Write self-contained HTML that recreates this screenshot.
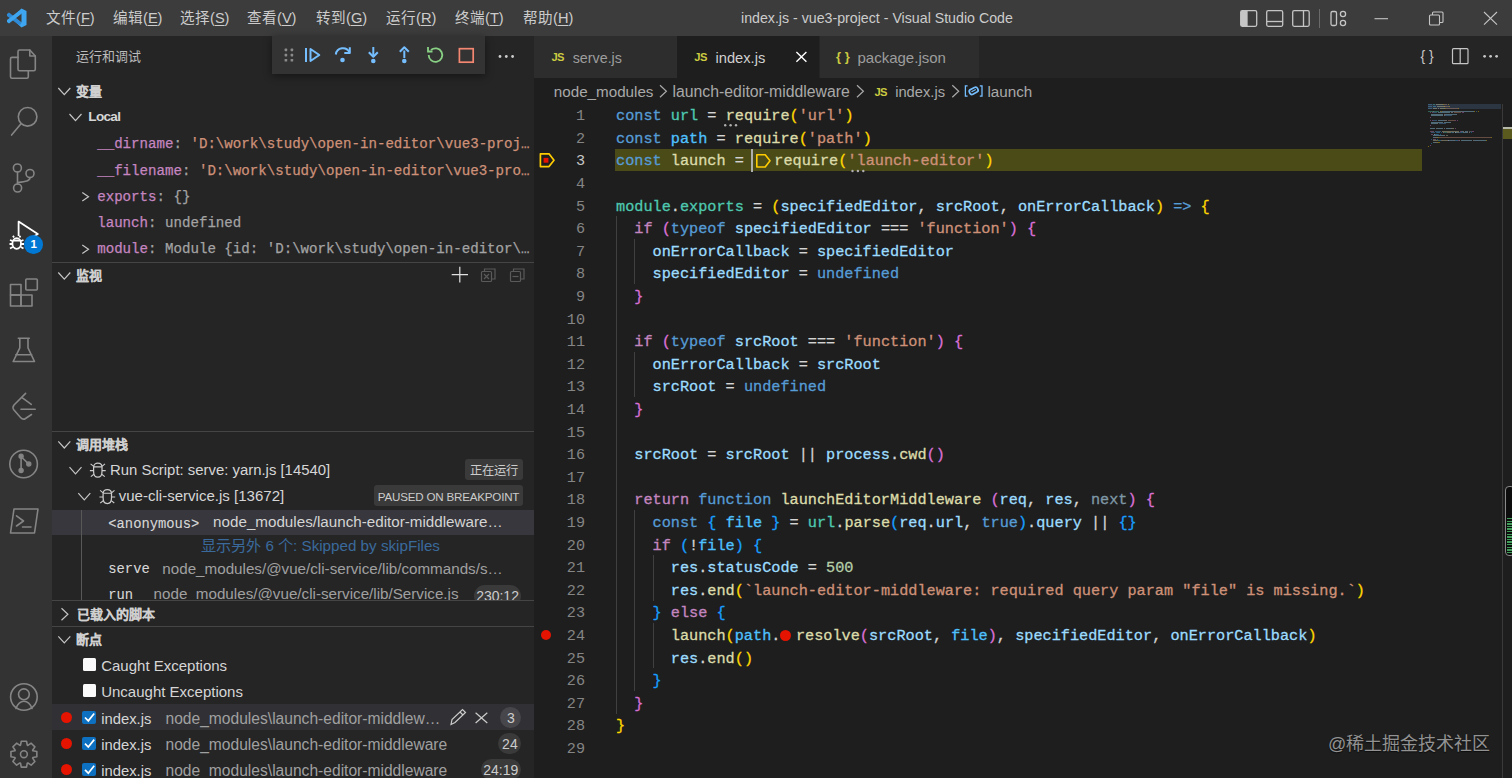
<!DOCTYPE html>
<html lang="zh-CN"><head><meta charset="utf-8">
<style>
*{margin:0;padding:0;box-sizing:border-box}
html,body{width:1512px;height:778px;overflow:hidden;background:#1e1e1e;font-family:"Liberation Sans",sans-serif;color:#d6d6d6}
.a{position:absolute;white-space:pre}
.mono{font-family:"Liberation Mono",monospace}
svg{position:absolute;overflow:visible}
.menu{font-size:14.6px;color:#cccccc;height:36px;line-height:36px;top:0}
.r{position:absolute;white-space:pre;height:26px;line-height:26px}
.ui{font-size:15px}
.hd{font-size:13px;font-weight:bold;color:#d0d0d0;-webkit-text-stroke:0.12px currentColor}
.vn{color:#c586c0}.vs{color:#ce9178}.vg{color:#a3a3a3}
.mono{-webkit-text-stroke:0.25px currentColor}
.cl{-webkit-text-stroke:0.3px currentColor;position:absolute;left:616px;height:22.6px;line-height:22.6px;font-family:"Liberation Mono",monospace;font-size:15.23px;white-space:pre;color:#d4d4d4}
.ln{position:absolute;left:545px;width:40px;text-align:right;height:22.6px;line-height:22.6px;font-family:"Liberation Mono",monospace;font-size:15.17px;color:#858585}
.k{color:#569cd6}.c{color:#c586c0}.v{color:#9cdcfe}.cn{color:#4fc1ff}.t{color:#4ec9b0}.f{color:#dcdcaa}.s{color:#ce9178}.n{color:#b5cea8}
.b1{color:#ffd700}.b2{color:#da70d6}.b3{color:#179fff}.dm{color:#7f98a6}
.badge{position:absolute;background:#3a3a3a;color:#cccccc;border-radius:3px;white-space:pre;text-align:center}
.pill{position:absolute;background:#3a3a3a;color:#cccccc;border-radius:11px;white-space:pre;text-align:center;font-size:14px}
.sep{position:absolute;left:52px;width:482px;height:1px;background:#454545}
</style></head><body>
<div class="a" style="left:0;top:0;width:1512px;height:36px;background:#3c3c3c"></div>
<div class="a" style="left:0;top:36px;width:52px;height:742px;background:#333333"></div>
<div class="a" style="left:52px;top:36px;width:482px;height:742px;background:#252526"></div>
<div class="a" style="left:534px;top:36px;width:978px;height:41.7px;background:#252526"></div>
<svg style="left:0;top:0" width="40" height="36"><path d="M21.5 8.5 L26.5 11 L26.5 25 L21.5 27.5 L11 18 L21.5 8.5Z M21.5 13.5 L15.5 18 L21.5 22.5Z" fill="#3ea6f0" fill-rule="evenodd"/><path d="M7 14 L9 12.5 L21 22 L21 24 L19 25 L7 16Z" fill="#2f8ad6"/><path d="M7 22 L9 23.5 L21 14 L21 12 L19 11 L7 20Z" fill="#3ea6f0"/></svg>
<div class="a menu" style="left:46px">文件(<u style="text-underline-offset:2px">F</u>)</div>
<div class="a menu" style="left:113px">编辑(<u style="text-underline-offset:2px">E</u>)</div>
<div class="a menu" style="left:180px">选择(<u style="text-underline-offset:2px">S</u>)</div>
<div class="a menu" style="left:247px">查看(<u style="text-underline-offset:2px">V</u>)</div>
<div class="a menu" style="left:316px">转到(<u style="text-underline-offset:2px">G</u>)</div>
<div class="a menu" style="left:386px">运行(<u style="text-underline-offset:2px">R</u>)</div>
<div class="a menu" style="left:455px">终端(<u style="text-underline-offset:2px">T</u>)</div>
<div class="a menu" style="left:523px">帮助(<u style="text-underline-offset:2px">H</u>)</div>
<div class="a" style="left:741px;top:0;height:36px;line-height:36px;font-size:14.2px;color:#cccccc">index.js - vue3-project - Visual Studio Code</div>
<svg style="left:0;top:0" width="1512" height="36" fill="none" stroke="#c5c5c5" stroke-width="1.3">
<rect x="1240.7" y="10.7" width="16" height="15.6" rx="1.5"/><rect x="1241" y="11" width="6" height="15" fill="#c5c5c5" stroke="none"/><line x1="1247" y1="11" x2="1247" y2="26"/>
<rect x="1266.7" y="10.7" width="16" height="15.6" rx="1.5"/><line x1="1267" y1="21.5" x2="1282.5" y2="21.5"/>
<rect x="1292.7" y="10.7" width="16.5" height="15.6" rx="1.5"/><line x1="1303.5" y1="11" x2="1303.5" y2="26"/>
<line x1="1319.5" y1="9" x2="1319.5" y2="28" stroke="#6a6a6a" stroke-width="1"/>
<rect x="1331" y="11.5" width="5.5" height="14" rx="1.5"/><circle cx="1343" cy="14" r="2.6"/><circle cx="1343" cy="23" r="2.6"/>
<line x1="1374.5" y1="18.7" x2="1388" y2="18.7" stroke-width="1.1"/>
<rect x="1429.5" y="15" width="10" height="10" rx="1" stroke-width="1.1"/><path d="M1432.5 15 V13 a1 1 0 0 1 1 -1 H1442 a1 1 0 0 1 1 1 V21.5 a1 1 0 0 1 -1 1 H1439.5" stroke-width="1.1"/>
<path d="M1484 12 L1497 24.7 M1497 12 L1484 24.7" stroke-width="1.1"/>
</svg>
<svg style="left:0;top:0" width="52" height="778" fill="none" stroke="#858585" stroke-width="1.6" stroke-linejoin="round" stroke-linecap="round">
<path d="M18 57.4 H12 a1.5 1.5 0 0 0 -1.5 1.5 V76.8 a1.5 1.5 0 0 0 1.5 1.5 H26.8 a1.5 1.5 0 0 0 1.5 -1.5 V70.8"/>
<path d="M19.5 50 H29.8 L35.3 56 V69.3 a1.5 1.5 0 0 1 -1.5 1.5 H19.5 a1.5 1.5 0 0 1 -1.5 -1.5 V51.5 a1.5 1.5 0 0 1 1.5 -1.5Z"/>
<path d="M29.8 50 V56 H35.3"/>
<circle cx="27.6" cy="116.8" r="9.3"/><line x1="11.6" y1="135.1" x2="21" y2="123.7"/>
<circle cx="17.4" cy="168" r="4"/><circle cx="30" cy="173.5" r="4"/><circle cx="17.6" cy="188" r="4"/>
<line x1="17.5" y1="172" x2="17.5" y2="184"/><path d="M30 177.5 C30 181 26 181.5 17.6 182.5"/>
<rect x="10.5" y="284.5" width="10.5" height="10.5"/><rect x="10.5" y="295" width="10.5" height="11"/><rect x="21" y="295" width="11" height="11"/><rect x="25.8" y="279" width="11.5" height="11" rx="1"/>
<path d="M18.3 338.3 H29.3 M19.8 338.3 V347.8 L13.2 361.5 H34.5 L28 347.8 V338.3 M15.8 354.7 H31.7"/>
<path d="M25.6 393.4 L14 405 Q12 407.5 14 410 L20.5 417.5 Q23 420.3 25.5 418.5 L31.5 414.5 M22.4 397.9 L31.3 404.3 M21 409.2 H35.2"/>
<circle cx="23.6" cy="464" r="13.8"/><path d="M21.1 458.5 V468.3 M22.5 458 L27 462.3"/><circle cx="21.1" cy="456.3" r="2.1" fill="#858585" stroke-width="1.2"/><circle cx="28.8" cy="464" r="2.1" fill="#858585" stroke-width="1.2"/><circle cx="21.1" cy="470.5" r="2.1" fill="#858585" stroke-width="1.2"/>
<path d="M14 509 H38 L34.5 533 H10.5Z"/><path d="M16.5 515.8 L23.5 521 L16.5 526 M22.5 527 H31"/>
<circle cx="23.9" cy="697" r="13.3"/><circle cx="23.9" cy="694.3" r="5.4"/><path d="M16 708.5 C18 703 21 701.3 23.9 701.3 C26.8 701.3 30 703 32 708.5"/>
</svg>
<svg style="left:0;top:0" width="52" height="778" fill="none" stroke="#858585" stroke-width="1.6" stroke-linejoin="round"><polygon points="36.84,751.58 36.84,756.82 32.88,757.58 32.64,758.16 34.90,761.49 31.19,765.20 27.86,762.94 27.28,763.18 26.52,767.14 21.28,767.14 20.52,763.18 19.94,762.94 16.61,765.20 12.90,761.49 15.16,758.16 14.92,757.58 10.96,756.82 10.96,751.58 14.92,750.82 15.16,750.24 12.90,746.91 16.61,743.20 19.94,745.46 20.52,745.22 21.28,741.26 26.52,741.26 27.28,745.22 27.86,745.46 31.19,743.20 34.90,746.91 32.64,750.24 32.88,750.82"/><circle cx="23.9" cy="754.2" r="3.4"/></svg>
<svg style="left:0;top:0" width="52" height="778" fill="none" stroke="#ffffff" stroke-width="1.8" stroke-linejoin="round">
<path d="M18.6 236 V221.6 L37.8 234 L33.5 236.8"/>
<ellipse cx="16.7" cy="243.5" rx="4.3" ry="5.3"/><path d="M13 240.5 H20.5 M10 240 L12.5 241 M23.5 240 L21 241 M9.5 244 H12.3 M24 244 H21 M10 248.5 L12.8 247 M23.5 248.5 L20.8 247 M14 237.5 L13 235.8 M19.4 237.5 L20.4 235.8"/>
</svg>
<div class="a" style="left:24.4px;top:235.4px;width:18.6px;height:18.6px;border-radius:50%;background:#0078d4;color:#fff;font-size:11.5px;font-weight:bold;text-align:center;line-height:18.6px">1</div>
<div class="r ui" style="left:76px;top:44.20px;height:26px;line-height:26px;font-size:13px;color:#bbbbbb">运行和调试</div>
<div class="a" style="left:271.5px;top:36px;width:213px;height:37.5px;background:#333333;box-shadow:0 2px 8px rgba(0,0,0,0.45)"></div>
<svg style="left:0;top:0" width="1" height="1">
<g fill="#8b8b8b"><rect x="284.6" y="48.6" width="2.6" height="2.6" rx="0.6"/><rect x="290.6" y="48.6" width="2.6" height="2.6" rx="0.6"/><rect x="284.6" y="53.8" width="2.6" height="2.6" rx="0.6"/><rect x="290.6" y="53.8" width="2.6" height="2.6" rx="0.6"/><rect x="284.6" y="59" width="2.6" height="2.6" rx="0.6"/><rect x="290.6" y="59" width="2.6" height="2.6" rx="0.6"/></g>
<g fill="none" stroke="#75beff" stroke-width="2" stroke-linejoin="round">
<line x1="306" y1="48" x2="306" y2="62"/><path d="M310.5 49 L319.3 55 L310.5 61Z"/>
<path d="M335.8 54.5 A7.2 7.2 0 0 1 349.5 52.5"/><path d="M349.8 47.3 V53 H344.3"/>
<line x1="373.3" y1="47" x2="373.3" y2="56.5"/><path d="M368.8 52.3 L373.3 56.8 L377.8 52.3"/>
<line x1="404.3" y1="50.5" x2="404.3" y2="58"/><path d="M399.8 51.7 L404.3 47.2 L408.8 51.7"/>
</g>
<g fill="#75beff"><circle cx="342.5" cy="60" r="2.3"/><circle cx="373.3" cy="61" r="2.3"/><circle cx="404.3" cy="61" r="2.3"/></g>
<path d="M431 50 A6.8 6.8 0 1 1 428.7 55" fill="none" stroke="#89d185" stroke-width="1.8"/><path d="M428 47 V51.5 H432.5" fill="none" stroke="#89d185" stroke-width="1.8"/>
<rect x="459.4" y="48.7" width="13.8" height="13.5" fill="none" stroke="#f48771" stroke-width="1.7"/>
<g fill="#cccccc"><circle cx="500" cy="56.5" r="1.4"/><circle cx="506.3" cy="56.5" r="1.4"/><circle cx="512.6" cy="56.5" r="1.4"/></g>
</svg>
<svg style="left:0;top:0" width="1" height="1"><path d="M58.3 88.0 L64.3 94.6 L70.3 88.0" fill="none" stroke="#c5c5c5" stroke-width="1.2"/></svg>
<div class="r hd" style="left:76px;top:78.50px;height:26px;line-height:26px;">变量</div>
<svg style="left:0;top:0" width="1" height="1"><path d="M69.5 114.0 L75.5 120.6 L81.5 114.0" fill="none" stroke="#c5c5c5" stroke-width="1.2"/></svg>
<div class="r ui" style="left:88.3px;top:104.30px;height:26px;line-height:26px;font-weight:bold;font-size:13.6px;letter-spacing:-0.7px">Local</div>
<div class="r mono" style="left:97.2px;top:130.90px;height:26px;line-height:26px;font-size:14.14px"><span class="vn">__dirname</span><span class="vg">: </span><span class="vs">'D:\work\study\open-in-editor\vue3-proj…</span></div>
<div class="r mono" style="left:97.2px;top:157.50px;height:26px;line-height:26px;font-size:14.14px"><span class="vn">__filename</span><span class="vg">: </span><span class="vs">'D:\work\study\open-in-editor\vue3-pro…</span></div>
<svg style="left:0;top:0" width="1" height="1"><path d="M82.3 192.60000000000002 L88.5 196.8 L82.3 201.0" fill="none" stroke="#c5c5c5" stroke-width="1.2"/></svg>
<div class="r mono" style="left:97.2px;top:183.50px;height:26px;line-height:26px;font-size:14.14px"><span class="vn">exports</span><span class="vg">: {}</span></div>
<div class="r mono" style="left:97.2px;top:210.00px;height:26px;line-height:26px;font-size:14.14px"><span class="vn">launch</span><span class="vg">: undefined</span></div>
<svg style="left:0;top:0" width="1" height="1"><path d="M82.3 245.10000000000002 L88.5 249.3 L82.3 253.5" fill="none" stroke="#c5c5c5" stroke-width="1.2"/></svg>
<div class="r mono" style="left:97.2px;top:236.20px;height:26px;line-height:26px;font-size:14.14px"><span class="vn">module</span><span class="vg">: Module {id: 'D:\work\study\open-in-editor\…</span></div>
<div class="sep" style="top:261.5px"></div>
<svg style="left:0;top:0" width="1" height="1"><path d="M58.3 272.5 L64.3 279.1 L70.3 272.5" fill="none" stroke="#c5c5c5" stroke-width="1.2"/></svg>
<div class="r hd" style="left:76px;top:263.20px;height:26px;line-height:26px;">监视</div>
<svg style="left:0;top:0" width="1" height="1" fill="none" stroke-width="1.2">
<path d="M459.8 266.7 V282.5 M451.7 274.6 H468" stroke="#e0e0e0"/>
<g stroke="#5a5a5a"><rect x="481.5" y="271.5" width="10" height="10" rx="1"/><path d="M484.5 271.5 V269 H495 V279 H491.5"/><path d="M484 274 L489 279 M489 274 L484 279"/>
<rect x="510.5" y="271.5" width="10" height="10" rx="1"/><path d="M513.5 271.5 V269 H524 V279 H520.5"/><path d="M512.5 276.5 H518.5"/></g>
</svg>
<div class="sep" style="top:431.2px"></div>
<svg style="left:0;top:0" width="1" height="1"><path d="M58.3 441.4 L64.3 448.0 L70.3 441.4" fill="none" stroke="#c5c5c5" stroke-width="1.2"/></svg>
<div class="r hd" style="left:76px;top:432.20px;height:26px;line-height:26px;">调用堆栈</div>
<svg style="left:0;top:0" width="1" height="1"><path d="M69.5 467.2 L75.5 473.8 L81.5 467.2" fill="none" stroke="#c5c5c5" stroke-width="1.2"/></svg>
<svg style="left:0;top:0" width="1" height="1"><g transform="translate(89.3,460.6)" fill="none" stroke="#cccccc" stroke-width="1.1"><path d="M4.3 6.5 C4.3 1.2 12.7 1.2 12.7 6.5 V10.8 C12.7 14.5 11 16.6 8.5 16.6 C6 16.6 4.3 14.5 4.3 10.8 Z" stroke-width="1.25"/><path d="M4.5 6.3 H12.5 M1.3 3.3 L4.3 5.8 M15.7 3.3 L12.7 5.8 M0.6 10 H4.3 M16.4 10 H12.7 M1.5 16 L4.6 13.6 M15.5 16 L12.4 13.6"/></g></svg>
<div class="r ui" style="left:110px;top:457.30px;height:26px;line-height:26px;font-size:14.9px">Run Script: serve: yarn.js [14540]</div>
<div class="badge" style="left:465.3px;top:459.3px;width:57.5px;height:21px;line-height:25.3px;font-size:12.3px">正在运行</div>
<svg style="left:0;top:0" width="1" height="1"><path d="M78.3 493.2 L84.3 499.8 L90.3 493.2" fill="none" stroke="#c5c5c5" stroke-width="1.2"/></svg>
<svg style="left:0;top:0" width="1" height="1"><g transform="translate(98.8,487)" fill="none" stroke="#cccccc" stroke-width="1.1"><path d="M4.3 6.5 C4.3 1.2 12.7 1.2 12.7 6.5 V10.8 C12.7 14.5 11 16.6 8.5 16.6 C6 16.6 4.3 14.5 4.3 10.8 Z" stroke-width="1.25"/><path d="M4.5 6.3 H12.5 M1.3 3.3 L4.3 5.8 M15.7 3.3 L12.7 5.8 M0.6 10 H4.3 M16.4 10 H12.7 M1.5 16 L4.6 13.6 M15.5 16 L12.4 13.6"/></g></svg>
<div class="r ui" style="left:118.7px;top:483.40px;height:26px;line-height:26px;font-size:15.05px">vue-cli-service.js [13672]</div>
<div class="badge" style="left:374.3px;top:485.2px;width:148.5px;height:21.2px;line-height:23.4px;font-size:11.6px;letter-spacing:-0.2px">PAUSED ON BREAKPOINT</div>
<div class="a" style="left:52px;top:509.5px;width:482px;height:25.1px;background:#37373d"></div>
<div class="a" style="left:81px;top:509.5px;width:1px;height:91px;background:#585858"></div>
<div class="r mono" style="left:108.3px;top:512.20px;height:26px;line-height:26px;font-size:13.8px;color:#d8d8d8;-webkit-text-stroke:0.1px currentColor">&lt;anonymous&gt;</div>
<div class="r ui" style="left:213.1px;top:509.30px;height:26px;line-height:26px;font-size:15.2px;color:#d4d4d4">node_modules/launch-editor-middleware…</div>
<div class="r ui" style="left:201.2px;top:533.30px;height:26px;line-height:26px;font-size:15.2px;color:#3a6a9c">显示另外 6 个: Skipped by skipFiles</div>
<div class="a" style="left:52px;top:556px;width:482px;height:44px;overflow:hidden">
<div class="r mono" style="left:56.3px;top:1px;font-size:13.8px;color:#d8d8d8;-webkit-text-stroke:0.1px currentColor">serve</div>
<div class="r ui" style="left:110.3px;top:-0.5px;font-size:15.2px;color:#a0a0a0">node_modules/@vue/cli-service/lib/commands/s…</div>
<div class="r mono" style="left:56.3px;top:26.8px;font-size:13.8px;color:#d8d8d8;-webkit-text-stroke:0.1px currentColor">run</div>
<div class="r ui" style="left:101.6px;top:25.4px;font-size:15.2px;color:#a0a0a0">node_modules/@vue/cli-service/lib/Service.js</div>
<div class="pill" style="left:422.4px;top:29.2px;width:46.3px;height:22px;line-height:22px">230:12</div>
</div>
<div class="sep" style="top:600.3px"></div>
<svg style="left:0;top:0" width="1" height="1"><path d="M61.5 608.2 L67.9 614.2 L61.5 620.2" fill="none" stroke="#c5c5c5" stroke-width="1.2"/></svg>
<div class="r hd" style="left:76.6px;top:601.60px;height:26px;line-height:26px;">已载入的脚本</div>
<div class="sep" style="top:625.8px"></div>
<svg style="left:0;top:0" width="1" height="1"><path d="M58.3 636.3000000000001 L64.3 642.9 L70.3 636.3000000000001" fill="none" stroke="#c5c5c5" stroke-width="1.2"/></svg>
<div class="r hd" style="left:76px;top:627.00px;height:26px;line-height:26px;">断点</div>
<div class="a" style="left:83px;top:658px;width:13.4px;height:13.4px;background:#fafafa;border-radius:1.5px"></div>
<div class="r ui" style="left:101.2px;top:653.10px;height:26px;line-height:26px;">Caught Exceptions</div>
<div class="a" style="left:83px;top:684.1px;width:13.4px;height:13.4px;background:#fafafa;border-radius:1.5px"></div>
<div class="r ui" style="left:101.2px;top:679.30px;height:26px;line-height:26px;">Uncaught Exceptions</div>
<div class="a" style="left:52px;top:704.4px;width:482px;height:25.8px;background:#313135"></div>
<div class="a" style="left:60.8px;top:711.80px;width:11px;height:11px;border-radius:50%;background:#e51400"></div>
<div class="a" style="left:82.2px;top:710.50px;width:14.2px;height:13.6px;background:#0e70c0;border-radius:2px"></div>
<svg style="left:0;top:0" width="1" height="1"><path d="M85 717.50 L88.3 720.90 L94.2 713.50" fill="none" stroke="#ffffff" stroke-width="1.7"/></svg>
<div class="r ui" style="left:101.2px;top:705.70px;height:26px;line-height:26px;font-size:14.8px">index.js</div>
<div class="r ui" style="left:165.5px;top:705.70px;height:26px;line-height:26px;font-size:15.6px;color:#a0a0a0">node_modules\launch-editor-middlew…</div>
<div class="pill" style="left:500.3px;top:707.00px;width:21.1px;height:20.6px;line-height:23.6px;font-size:14px;background:#47474b">3</div>
<svg style="left:0;top:0" width="1" height="1" fill="none" stroke="#cccccc" stroke-width="1.2">
<path d="M451 724.5 L452 719.5 L462.5 709.5 L465.5 712.5 L455 722.5 Z M460 712 L463 715"/>
<path d="M475.6 712.7 L487.3 723 M487.3 712.7 L475.6 723"/>
</svg>
<div class="a" style="left:60.8px;top:737.90px;width:11px;height:11px;border-radius:50%;background:#e51400"></div>
<div class="a" style="left:82.2px;top:736.60px;width:14.2px;height:13.6px;background:#0e70c0;border-radius:2px"></div>
<svg style="left:0;top:0" width="1" height="1"><path d="M85 743.60 L88.3 747.00 L94.2 739.60" fill="none" stroke="#ffffff" stroke-width="1.7"/></svg>
<div class="r ui" style="left:101.2px;top:731.80px;height:26px;line-height:26px;font-size:14.8px">index.js</div>
<div class="r ui" style="left:165.5px;top:731.80px;height:26px;line-height:26px;font-size:15.6px;color:#a0a0a0">node_modules\launch-editor-middleware</div>
<div class="pill" style="left:498.4px;top:733.10px;width:23px;height:20.6px;line-height:23.6px;font-size:14px;background:#3a3a3a">24</div>
<div class="a" style="left:60.8px;top:764.10px;width:11px;height:11px;border-radius:50%;background:#e51400"></div>
<div class="a" style="left:82.2px;top:762.80px;width:14.2px;height:13.6px;background:#0e70c0;border-radius:2px"></div>
<svg style="left:0;top:0" width="1" height="1"><path d="M85 769.80 L88.3 773.20 L94.2 765.80" fill="none" stroke="#ffffff" stroke-width="1.7"/></svg>
<div class="r ui" style="left:101.2px;top:758.00px;height:26px;line-height:26px;font-size:14.8px">index.js</div>
<div class="r ui" style="left:165.5px;top:758.00px;height:26px;line-height:26px;font-size:15.6px;color:#a0a0a0">node_modules\launch-editor-middleware</div>
<div class="pill" style="left:481px;top:759.30px;width:39.6px;height:20.6px;line-height:23.6px;font-size:14px;background:#3a3a3a">24:19</div>
<div class="a" style="left:534px;top:36px;width:143px;height:41.7px;background:#2d2d2d"></div>
<div class="a" style="left:677px;top:36px;width:142px;height:41.7px;background:#1e1e1e"></div>
<div class="a" style="left:819.5px;top:36px;width:159px;height:41.7px;background:#2d2d2d"></div>
<div class="r" style="left:551.4px;top:43.9px;font-size:11.2px;font-weight:bold;color:#cbcb41;letter-spacing:-0.5px">JS</div>
<div class="r ui" style="left:572.7px;top:44.80px;height:26px;line-height:26px;font-size:14.3px;color:#9d9d9d">serve.js</div>
<div class="r" style="left:694.3px;top:43.9px;font-size:11.2px;font-weight:bold;color:#cbcb41;letter-spacing:-0.5px">JS</div>
<div class="r ui" style="left:715.5px;top:44.80px;height:26px;line-height:26px;font-size:14.7px;color:#d0d0d0">index.js</div>
<svg style="left:0;top:0" width="1" height="1"><path d="M796.4 51.9 L806.4 61.8 M806.4 51.9 L796.4 61.8" stroke="#ffffff" stroke-width="1.4"/></svg>
<div class="r ui" style="left:836px;top:44.00px;height:26px;line-height:26px;font-size:13px;font-weight:bold;color:#cbcb41">{ }</div>
<div class="r ui" style="left:857.5px;top:44.80px;height:26px;line-height:26px;font-size:15px;color:#9d9d9d">package.json</div>
<svg style="left:0;top:0" width="1" height="1" fill="none" stroke="#c5c5c5" stroke-width="1.2">
<rect x="1452.5" y="48.7" width="15.5" height="15" rx="1"/><line x1="1460.2" y1="49" x2="1460.2" y2="63.5"/>
</svg>
<div class="r" style="left:1420.5px;top:43px;font-size:14px;color:#c5c5c5">{ }</div>
<svg style="left:0;top:0" width="1" height="1"><g fill="#c5c5c5"><circle cx="1484.6" cy="56.3" r="1.4"/><circle cx="1490.6" cy="56.3" r="1.4"/><circle cx="1496.6" cy="56.3" r="1.4"/></g></svg>
<div class="r ui" style="left:553.8px;top:79.20px;height:26px;line-height:26px;font-size:15.2px;color:#a9a9a9">node_modules</div>
<svg style="left:0;top:0" width="1" height="1"><path d="M660 85.2 L666.4 91.2 L660 97.2" fill="none" stroke="#a9a9a9" stroke-width="1.2"/></svg>
<div class="r ui" style="left:672.5px;top:79.20px;height:26px;line-height:26px;font-size:15.2px;color:#a9a9a9;font-size:15.8px">launch-editor-middleware</div>
<svg style="left:0;top:0" width="1" height="1"><path d="M857 85.2 L863.4 91.2 L857 97.2" fill="none" stroke="#a9a9a9" stroke-width="1.2"/></svg>
<div class="r" style="left:874.4px;top:78.5px;font-size:11.2px;font-weight:bold;color:#cbcb41;letter-spacing:-0.5px">JS</div>
<div class="r ui" style="left:895.2px;top:79.20px;height:26px;line-height:26px;font-size:15.2px;color:#a9a9a9;font-size:14.7px">index.js</div>
<svg style="left:0;top:0" width="1" height="1"><path d="M952.3 85.2 L958.6999999999999 91.2 L952.3 97.2" fill="none" stroke="#a9a9a9" stroke-width="1.2"/></svg>
<svg style="left:0;top:0" width="1" height="1" fill="none" stroke="#75beff" stroke-width="1.3">
<path d="M967.6 85.8 H965.4 V96.2 H967.6 M979.8 85.8 H982 V96.2 H979.8"/><rect x="969.2" y="88.2" width="9" height="5.2" rx="2.2" transform="rotate(-28 973.7 90.8)" stroke-width="1.7"/><path d="M971.5 91.8 L975.8 89.6" stroke-width="1.1"/>
</svg>
<div class="r ui" style="left:987.5px;top:79.20px;height:26px;line-height:26px;font-size:15.2px;color:#a9a9a9">launch</div>
<div class="a" style="left:615.3px;top:148.60px;width:806.7px;height:22.6px;background:#4b4b18"></div>
<div class="a" style="left:616.0px;top:216.40px;width:1px;height:497.20px;background:#404040"></div>
<div class="a" style="left:634.3px;top:239.00px;width:1px;height:45.20px;background:#404040"></div>
<div class="a" style="left:634.3px;top:352.00px;width:1px;height:45.20px;background:#404040"></div>
<div class="a" style="left:634.3px;top:510.20px;width:1px;height:180.80px;background:#404040"></div>
<div class="a" style="left:652.6px;top:555.40px;width:1px;height:45.20px;background:#404040"></div>
<div class="a" style="left:652.6px;top:623.20px;width:1px;height:45.20px;background:#404040"></div>
<div class="ln" style="top:105.10px;color:#858585">1</div>
<div class="cl" style="top:105.10px"><span class="k">const</span> <span class="t">url</span> = <span class="f">require</span><span class="b1">(</span><span class="s">'url'</span><span class="b1">)</span></div>
<div class="ln" style="top:127.70px;color:#858585">2</div>
<div class="cl" style="top:127.70px"><span class="k">const</span> <span class="cn">path</span> = <span class="f">require</span><span class="b1">(</span><span class="s">'path'</span><span class="b1">)</span></div>
<div class="ln" style="top:150.30px;color:#c6c6c6">3</div>
<div class="cl" style="top:150.30px"><span class="k">const</span> <span class="f">launch</span> = <span style="display:inline-block;width:21.3px"></span><span class="f">require</span><span class="b1">(</span><span class="s">'launch-editor'</span><span class="b1">)</span></div>
<div class="ln" style="top:172.90px;color:#858585">4</div>
<div class="ln" style="top:195.50px;color:#858585">5</div>
<div class="cl" style="top:195.50px"><span class="t">module</span>.<span class="t">exports</span> = <span class="b1">(</span><span class="v">specifiedEditor</span>, <span class="v">srcRoot</span>, <span class="v">onErrorCallback</span><span class="b1">)</span> <span class="k">=&gt;</span> <span class="b1">{</span></div>
<div class="ln" style="top:218.10px;color:#858585">6</div>
<div class="cl" style="top:218.10px">  <span class="c">if</span> <span class="b2">(</span><span class="k">typeof</span> <span class="v">specifiedEditor</span> === <span class="s">'function'</span><span class="b2">)</span> <span class="b2">{</span></div>
<div class="ln" style="top:240.70px;color:#858585">7</div>
<div class="cl" style="top:240.70px">    <span class="v">onErrorCallback</span> = <span class="v">specifiedEditor</span></div>
<div class="ln" style="top:263.30px;color:#858585">8</div>
<div class="cl" style="top:263.30px">    <span class="v">specifiedEditor</span> = <span class="k">undefined</span></div>
<div class="ln" style="top:285.90px;color:#858585">9</div>
<div class="cl" style="top:285.90px">  <span class="b2">}</span></div>
<div class="ln" style="top:308.50px;color:#858585">10</div>
<div class="ln" style="top:331.10px;color:#858585">11</div>
<div class="cl" style="top:331.10px">  <span class="c">if</span> <span class="b2">(</span><span class="k">typeof</span> <span class="v">srcRoot</span> === <span class="s">'function'</span><span class="b2">)</span> <span class="b2">{</span></div>
<div class="ln" style="top:353.70px;color:#858585">12</div>
<div class="cl" style="top:353.70px">    <span class="v">onErrorCallback</span> = <span class="v">srcRoot</span></div>
<div class="ln" style="top:376.30px;color:#858585">13</div>
<div class="cl" style="top:376.30px">    <span class="v">srcRoot</span> = <span class="k">undefined</span></div>
<div class="ln" style="top:398.90px;color:#858585">14</div>
<div class="cl" style="top:398.90px">  <span class="b2">}</span></div>
<div class="ln" style="top:421.50px;color:#858585">15</div>
<div class="ln" style="top:444.10px;color:#858585">16</div>
<div class="cl" style="top:444.10px">  <span class="v">srcRoot</span> = <span class="v">srcRoot</span> || <span class="v">process</span>.<span class="f">cwd</span><span class="b2">()</span></div>
<div class="ln" style="top:466.70px;color:#858585">17</div>
<div class="ln" style="top:489.30px;color:#858585">18</div>
<div class="cl" style="top:489.30px">  <span class="c">return</span> <span class="k">function</span> <span class="f">launchEditorMiddleware</span> <span class="b2">(</span><span class="v">req</span>, <span class="v">res</span>, <span class="dm">next</span><span class="b2">)</span> <span class="b2">{</span></div>
<div class="ln" style="top:511.90px;color:#858585">19</div>
<div class="cl" style="top:511.90px">    <span class="k">const</span> <span class="b3">{</span> <span class="cn">file</span> <span class="b3">}</span> = <span class="t">url</span>.<span class="f">parse</span><span class="b3">(</span><span class="v">req</span>.<span class="v">url</span>, <span class="k">true</span><span class="b3">)</span>.<span class="v">query</span> || <span class="b3">{}</span></div>
<div class="ln" style="top:534.50px;color:#858585">20</div>
<div class="cl" style="top:534.50px">    <span class="c">if</span> <span class="b3">(</span>!<span class="cn">file</span><span class="b3">)</span> <span class="b3">{</span></div>
<div class="ln" style="top:557.10px;color:#858585">21</div>
<div class="cl" style="top:557.10px">      <span class="v">res</span>.<span class="v">statusCode</span> = <span class="n">500</span></div>
<div class="ln" style="top:579.70px;color:#858585">22</div>
<div class="cl" style="top:579.70px">      <span class="v">res</span>.<span class="f">end</span><span class="b1">(</span><span class="s">`launch-editor-middleware: required query param "file" is missing.`</span><span class="b1">)</span></div>
<div class="ln" style="top:602.30px;color:#858585">23</div>
<div class="cl" style="top:602.30px">    <span class="b3">}</span> <span class="c">else</span> <span class="b3">{</span></div>
<div class="ln" style="top:624.90px;color:#858585">24</div>
<div class="cl" style="top:624.90px">      <span class="f">launch</span><span class="b1">(</span><span class="cn">path</span>.<span style="display:inline-block;width:15.5px"></span><span class="f">resolve</span><span class="b2">(</span><span class="v">srcRoot</span>, <span class="cn">file</span><span class="b2">)</span>, <span class="v">specifiedEditor</span>, <span class="v">onErrorCallback</span><span class="b1">)</span></div>
<div class="ln" style="top:647.50px;color:#858585">25</div>
<div class="cl" style="top:647.50px">      <span class="v">res</span>.<span class="f">end</span><span class="b1">()</span></div>
<div class="ln" style="top:670.10px;color:#858585">26</div>
<div class="cl" style="top:670.10px">    <span class="b3">}</span></div>
<div class="ln" style="top:692.70px;color:#858585">27</div>
<div class="cl" style="top:692.70px">  <span class="b2">}</span></div>
<div class="ln" style="top:715.30px;color:#858585">28</div>
<div class="cl" style="top:715.30px"><span class="b1">}</span></div>
<div class="ln" style="top:737.90px;color:#858585">29</div>
<div class="a" style="left:750.8px;top:148.8px;width:2.4px;height:23.2px;background:#aeafad"></div>
<svg style="left:0;top:0" width="1" height="1"><path d="M756.8 154.7 H765.2 L770 160.8 L765.2 167 H756.8Z" fill="none" stroke="#ffcc00" stroke-width="1.6" stroke-linejoin="round"/></svg>
<svg style="left:0;top:0" width="1" height="1"><path d="M540.4 153.8 H549 L554 160.2 L549 166.6 H540.4Z" fill="none" stroke="#ffcc00" stroke-width="1.7" stroke-linejoin="round"/><rect x="543.6" y="157.9" width="4.8" height="4.8" fill="#e51400"/></svg>
<div class="a" style="left:541px;top:630px;width:10px;height:10px;border-radius:50%;background:#e51400"></div>
<div class="a" style="left:780px;top:629.8px;width:11px;height:11px;border-radius:50%;background:#e51400"></div>
<svg style="left:0;top:0" width="1" height="1"><g fill="#b0b0b0"><circle cx="725.2" cy="125.3" r="1.2"/><circle cx="730.6" cy="125.3" r="1.2"/><circle cx="736" cy="125.3" r="1.2"/><circle cx="852.5" cy="171" r="1.2"/><circle cx="857.9" cy="171" r="1.2"/><circle cx="863.3" cy="171" r="1.2"/></g></svg>
<div class="a" style="left:1501.5px;top:103.7px;width:1px;height:675px;background:#3a3a3a"></div>
<div class="a" style="left:1502.5px;top:127px;width:9.5px;height:11.5px;background:#5a5a1e"></div>
<div class="a" style="left:1502.5px;top:127px;width:9.5px;height:1.5px;background:#b8b8a8"></div>
<div class="a" style="left:1428px;top:104px;width:73px;height:5px;background:rgba(80,120,160,0.28)"></div>
<div class="a" style="left:1428.0px;top:104.4px;width:3.9px;height:1px;background:#569cd6;opacity:0.4"></div>
<div class="a" style="left:1432.7px;top:104.4px;width:2.3px;height:1px;background:#4ec9b0;opacity:0.4"></div>
<div class="a" style="left:1435.8px;top:104.4px;width:0.8px;height:1px;background:#d4d4d4;opacity:0.4"></div>
<div class="a" style="left:1437.4px;top:104.4px;width:5.5px;height:1px;background:#dcdcaa;opacity:0.4"></div>
<div class="a" style="left:1442.8px;top:104.4px;width:0.8px;height:1px;background:#ffd700;opacity:0.4"></div>
<div class="a" style="left:1443.6px;top:104.4px;width:3.9px;height:1px;background:#ce9178;opacity:0.4"></div>
<div class="a" style="left:1447.5px;top:104.4px;width:0.8px;height:1px;background:#ffd700;opacity:0.4"></div>
<div class="a" style="left:1428.0px;top:106.0px;width:3.9px;height:1px;background:#569cd6;opacity:0.4"></div>
<div class="a" style="left:1432.7px;top:106.0px;width:3.1px;height:1px;background:#4fc1ff;opacity:0.4"></div>
<div class="a" style="left:1436.6px;top:106.0px;width:0.8px;height:1px;background:#d4d4d4;opacity:0.4"></div>
<div class="a" style="left:1438.1px;top:106.0px;width:5.5px;height:1px;background:#dcdcaa;opacity:0.4"></div>
<div class="a" style="left:1443.6px;top:106.0px;width:0.8px;height:1px;background:#ffd700;opacity:0.4"></div>
<div class="a" style="left:1444.4px;top:106.0px;width:4.7px;height:1px;background:#ce9178;opacity:0.4"></div>
<div class="a" style="left:1449.1px;top:106.0px;width:0.8px;height:1px;background:#ffd700;opacity:0.4"></div>
<div class="a" style="left:1428.0px;top:107.5px;width:3.9px;height:1px;background:#569cd6;opacity:0.4"></div>
<div class="a" style="left:1432.7px;top:107.5px;width:4.7px;height:1px;background:#dcdcaa;opacity:0.4"></div>
<div class="a" style="left:1438.1px;top:107.5px;width:0.8px;height:1px;background:#d4d4d4;opacity:0.4"></div>
<div class="a" style="left:1439.7px;top:107.5px;width:5.5px;height:1px;background:#dcdcaa;opacity:0.4"></div>
<div class="a" style="left:1445.2px;top:107.5px;width:0.8px;height:1px;background:#ffd700;opacity:0.4"></div>
<div class="a" style="left:1445.9px;top:107.5px;width:11.7px;height:1px;background:#ce9178;opacity:0.4"></div>
<div class="a" style="left:1457.6px;top:107.5px;width:0.8px;height:1px;background:#ffd700;opacity:0.4"></div>
<div class="a" style="left:1428.0px;top:110.6px;width:4.7px;height:1px;background:#4ec9b0;opacity:0.4"></div>
<div class="a" style="left:1432.7px;top:110.6px;width:0.8px;height:1px;background:#d4d4d4;opacity:0.4"></div>
<div class="a" style="left:1433.5px;top:110.6px;width:5.5px;height:1px;background:#4ec9b0;opacity:0.4"></div>
<div class="a" style="left:1439.7px;top:110.6px;width:0.8px;height:1px;background:#d4d4d4;opacity:0.4"></div>
<div class="a" style="left:1441.3px;top:110.6px;width:0.8px;height:1px;background:#ffd700;opacity:0.4"></div>
<div class="a" style="left:1442.0px;top:110.6px;width:11.7px;height:1px;background:#9cdcfe;opacity:0.4"></div>
<div class="a" style="left:1453.7px;top:110.6px;width:0.8px;height:1px;background:#d4d4d4;opacity:0.4"></div>
<div class="a" style="left:1455.3px;top:110.6px;width:5.5px;height:1px;background:#9cdcfe;opacity:0.4"></div>
<div class="a" style="left:1460.8px;top:110.6px;width:0.8px;height:1px;background:#d4d4d4;opacity:0.4"></div>
<div class="a" style="left:1462.3px;top:110.6px;width:11.7px;height:1px;background:#9cdcfe;opacity:0.4"></div>
<div class="a" style="left:1474.0px;top:110.6px;width:0.8px;height:1px;background:#ffd700;opacity:0.4"></div>
<div class="a" style="left:1475.6px;top:110.6px;width:1.6px;height:1px;background:#569cd6;opacity:0.4"></div>
<div class="a" style="left:1477.9px;top:110.6px;width:0.8px;height:1px;background:#ffd700;opacity:0.4"></div>
<div class="a" style="left:1429.6px;top:112.2px;width:1.6px;height:1px;background:#c586c0;opacity:0.4"></div>
<div class="a" style="left:1431.9px;top:112.2px;width:0.8px;height:1px;background:#da70d6;opacity:0.4"></div>
<div class="a" style="left:1432.7px;top:112.2px;width:4.7px;height:1px;background:#569cd6;opacity:0.4"></div>
<div class="a" style="left:1438.1px;top:112.2px;width:11.7px;height:1px;background:#9cdcfe;opacity:0.4"></div>
<div class="a" style="left:1450.6px;top:112.2px;width:2.3px;height:1px;background:#d4d4d4;opacity:0.4"></div>
<div class="a" style="left:1453.7px;top:112.2px;width:7.8px;height:1px;background:#ce9178;opacity:0.4"></div>
<div class="a" style="left:1461.5px;top:112.2px;width:0.8px;height:1px;background:#da70d6;opacity:0.4"></div>
<div class="a" style="left:1463.1px;top:112.2px;width:0.8px;height:1px;background:#da70d6;opacity:0.4"></div>
<div class="a" style="left:1431.1px;top:113.7px;width:11.7px;height:1px;background:#9cdcfe;opacity:0.4"></div>
<div class="a" style="left:1443.6px;top:113.7px;width:0.8px;height:1px;background:#d4d4d4;opacity:0.4"></div>
<div class="a" style="left:1445.2px;top:113.7px;width:11.7px;height:1px;background:#9cdcfe;opacity:0.4"></div>
<div class="a" style="left:1431.1px;top:115.2px;width:11.7px;height:1px;background:#9cdcfe;opacity:0.4"></div>
<div class="a" style="left:1443.6px;top:115.2px;width:0.8px;height:1px;background:#d4d4d4;opacity:0.4"></div>
<div class="a" style="left:1445.2px;top:115.2px;width:7.0px;height:1px;background:#569cd6;opacity:0.4"></div>
<div class="a" style="left:1429.6px;top:116.8px;width:0.8px;height:1px;background:#da70d6;opacity:0.4"></div>
<div class="a" style="left:1429.6px;top:119.9px;width:1.6px;height:1px;background:#c586c0;opacity:0.4"></div>
<div class="a" style="left:1431.9px;top:119.9px;width:0.8px;height:1px;background:#da70d6;opacity:0.4"></div>
<div class="a" style="left:1432.7px;top:119.9px;width:4.7px;height:1px;background:#569cd6;opacity:0.4"></div>
<div class="a" style="left:1438.1px;top:119.9px;width:5.5px;height:1px;background:#9cdcfe;opacity:0.4"></div>
<div class="a" style="left:1444.4px;top:119.9px;width:2.3px;height:1px;background:#d4d4d4;opacity:0.4"></div>
<div class="a" style="left:1447.5px;top:119.9px;width:7.8px;height:1px;background:#ce9178;opacity:0.4"></div>
<div class="a" style="left:1455.3px;top:119.9px;width:0.8px;height:1px;background:#da70d6;opacity:0.4"></div>
<div class="a" style="left:1456.9px;top:119.9px;width:0.8px;height:1px;background:#da70d6;opacity:0.4"></div>
<div class="a" style="left:1431.1px;top:121.5px;width:11.7px;height:1px;background:#9cdcfe;opacity:0.4"></div>
<div class="a" style="left:1443.6px;top:121.5px;width:0.8px;height:1px;background:#d4d4d4;opacity:0.4"></div>
<div class="a" style="left:1445.2px;top:121.5px;width:5.5px;height:1px;background:#9cdcfe;opacity:0.4"></div>
<div class="a" style="left:1431.1px;top:123.0px;width:5.5px;height:1px;background:#9cdcfe;opacity:0.4"></div>
<div class="a" style="left:1437.4px;top:123.0px;width:0.8px;height:1px;background:#d4d4d4;opacity:0.4"></div>
<div class="a" style="left:1438.9px;top:123.0px;width:7.0px;height:1px;background:#569cd6;opacity:0.4"></div>
<div class="a" style="left:1429.6px;top:124.6px;width:0.8px;height:1px;background:#da70d6;opacity:0.4"></div>
<div class="a" style="left:1429.6px;top:127.7px;width:5.5px;height:1px;background:#9cdcfe;opacity:0.4"></div>
<div class="a" style="left:1435.8px;top:127.7px;width:0.8px;height:1px;background:#d4d4d4;opacity:0.4"></div>
<div class="a" style="left:1437.4px;top:127.7px;width:5.5px;height:1px;background:#9cdcfe;opacity:0.4"></div>
<div class="a" style="left:1443.6px;top:127.7px;width:1.6px;height:1px;background:#d4d4d4;opacity:0.4"></div>
<div class="a" style="left:1445.9px;top:127.7px;width:5.5px;height:1px;background:#9cdcfe;opacity:0.4"></div>
<div class="a" style="left:1451.4px;top:127.7px;width:0.8px;height:1px;background:#d4d4d4;opacity:0.4"></div>
<div class="a" style="left:1452.2px;top:127.7px;width:2.3px;height:1px;background:#dcdcaa;opacity:0.4"></div>
<div class="a" style="left:1454.5px;top:127.7px;width:1.6px;height:1px;background:#da70d6;opacity:0.4"></div>
<div class="a" style="left:1429.6px;top:130.8px;width:4.7px;height:1px;background:#c586c0;opacity:0.4"></div>
<div class="a" style="left:1435.0px;top:130.8px;width:6.2px;height:1px;background:#569cd6;opacity:0.4"></div>
<div class="a" style="left:1442.0px;top:130.8px;width:17.2px;height:1px;background:#dcdcaa;opacity:0.4"></div>
<div class="a" style="left:1460.0px;top:130.8px;width:0.8px;height:1px;background:#da70d6;opacity:0.4"></div>
<div class="a" style="left:1460.8px;top:130.8px;width:2.3px;height:1px;background:#9cdcfe;opacity:0.4"></div>
<div class="a" style="left:1463.1px;top:130.8px;width:0.8px;height:1px;background:#d4d4d4;opacity:0.4"></div>
<div class="a" style="left:1464.7px;top:130.8px;width:2.3px;height:1px;background:#9cdcfe;opacity:0.4"></div>
<div class="a" style="left:1467.0px;top:130.8px;width:0.8px;height:1px;background:#d4d4d4;opacity:0.4"></div>
<div class="a" style="left:1468.6px;top:130.8px;width:3.1px;height:1px;background:#7f98a6;opacity:0.4"></div>
<div class="a" style="left:1471.7px;top:130.8px;width:0.8px;height:1px;background:#da70d6;opacity:0.4"></div>
<div class="a" style="left:1473.2px;top:130.8px;width:0.8px;height:1px;background:#da70d6;opacity:0.4"></div>
<div class="a" style="left:1431.1px;top:132.3px;width:3.9px;height:1px;background:#569cd6;opacity:0.4"></div>
<div class="a" style="left:1435.8px;top:132.3px;width:0.8px;height:1px;background:#179fff;opacity:0.4"></div>
<div class="a" style="left:1437.4px;top:132.3px;width:3.1px;height:1px;background:#4fc1ff;opacity:0.4"></div>
<div class="a" style="left:1441.3px;top:132.3px;width:0.8px;height:1px;background:#179fff;opacity:0.4"></div>
<div class="a" style="left:1442.8px;top:132.3px;width:0.8px;height:1px;background:#d4d4d4;opacity:0.4"></div>
<div class="a" style="left:1444.4px;top:132.3px;width:2.3px;height:1px;background:#4ec9b0;opacity:0.4"></div>
<div class="a" style="left:1446.7px;top:132.3px;width:0.8px;height:1px;background:#d4d4d4;opacity:0.4"></div>
<div class="a" style="left:1447.5px;top:132.3px;width:3.9px;height:1px;background:#dcdcaa;opacity:0.4"></div>
<div class="a" style="left:1451.4px;top:132.3px;width:0.8px;height:1px;background:#179fff;opacity:0.4"></div>
<div class="a" style="left:1452.2px;top:132.3px;width:2.3px;height:1px;background:#9cdcfe;opacity:0.4"></div>
<div class="a" style="left:1454.5px;top:132.3px;width:0.8px;height:1px;background:#d4d4d4;opacity:0.4"></div>
<div class="a" style="left:1455.3px;top:132.3px;width:2.3px;height:1px;background:#9cdcfe;opacity:0.4"></div>
<div class="a" style="left:1457.6px;top:132.3px;width:0.8px;height:1px;background:#d4d4d4;opacity:0.4"></div>
<div class="a" style="left:1459.2px;top:132.3px;width:3.1px;height:1px;background:#569cd6;opacity:0.4"></div>
<div class="a" style="left:1462.3px;top:132.3px;width:0.8px;height:1px;background:#179fff;opacity:0.4"></div>
<div class="a" style="left:1463.1px;top:132.3px;width:0.8px;height:1px;background:#d4d4d4;opacity:0.4"></div>
<div class="a" style="left:1463.9px;top:132.3px;width:3.9px;height:1px;background:#9cdcfe;opacity:0.4"></div>
<div class="a" style="left:1468.6px;top:132.3px;width:1.6px;height:1px;background:#d4d4d4;opacity:0.4"></div>
<div class="a" style="left:1470.9px;top:132.3px;width:1.6px;height:1px;background:#179fff;opacity:0.4"></div>
<div class="a" style="left:1431.1px;top:133.8px;width:1.6px;height:1px;background:#c586c0;opacity:0.4"></div>
<div class="a" style="left:1433.5px;top:133.8px;width:0.8px;height:1px;background:#179fff;opacity:0.4"></div>
<div class="a" style="left:1434.2px;top:133.8px;width:0.8px;height:1px;background:#d4d4d4;opacity:0.4"></div>
<div class="a" style="left:1435.0px;top:133.8px;width:3.1px;height:1px;background:#4fc1ff;opacity:0.4"></div>
<div class="a" style="left:1438.1px;top:133.8px;width:0.8px;height:1px;background:#179fff;opacity:0.4"></div>
<div class="a" style="left:1439.7px;top:133.8px;width:0.8px;height:1px;background:#179fff;opacity:0.4"></div>
<div class="a" style="left:1432.7px;top:135.4px;width:2.3px;height:1px;background:#9cdcfe;opacity:0.4"></div>
<div class="a" style="left:1435.0px;top:135.4px;width:0.8px;height:1px;background:#d4d4d4;opacity:0.4"></div>
<div class="a" style="left:1435.8px;top:135.4px;width:7.8px;height:1px;background:#9cdcfe;opacity:0.4"></div>
<div class="a" style="left:1444.4px;top:135.4px;width:0.8px;height:1px;background:#d4d4d4;opacity:0.4"></div>
<div class="a" style="left:1445.9px;top:135.4px;width:2.3px;height:1px;background:#b5cea8;opacity:0.4"></div>
<div class="a" style="left:1432.7px;top:137.0px;width:2.3px;height:1px;background:#9cdcfe;opacity:0.4"></div>
<div class="a" style="left:1435.0px;top:137.0px;width:0.8px;height:1px;background:#d4d4d4;opacity:0.4"></div>
<div class="a" style="left:1435.8px;top:137.0px;width:2.3px;height:1px;background:#dcdcaa;opacity:0.4"></div>
<div class="a" style="left:1438.1px;top:137.0px;width:0.8px;height:1px;background:#ffd700;opacity:0.4"></div>
<div class="a" style="left:1438.9px;top:137.0px;width:52.3px;height:1px;background:#ce9178;opacity:0.4"></div>
<div class="a" style="left:1491.2px;top:137.0px;width:0.8px;height:1px;background:#ffd700;opacity:0.4"></div>
<div class="a" style="left:1431.1px;top:138.5px;width:0.8px;height:1px;background:#179fff;opacity:0.4"></div>
<div class="a" style="left:1432.7px;top:138.5px;width:3.1px;height:1px;background:#c586c0;opacity:0.4"></div>
<div class="a" style="left:1436.6px;top:138.5px;width:0.8px;height:1px;background:#179fff;opacity:0.4"></div>
<div class="a" style="left:1432.7px;top:140.1px;width:4.7px;height:1px;background:#dcdcaa;opacity:0.4"></div>
<div class="a" style="left:1437.4px;top:140.1px;width:0.8px;height:1px;background:#ffd700;opacity:0.4"></div>
<div class="a" style="left:1438.1px;top:140.1px;width:3.1px;height:1px;background:#4fc1ff;opacity:0.4"></div>
<div class="a" style="left:1441.3px;top:140.1px;width:0.8px;height:1px;background:#d4d4d4;opacity:0.4"></div>
<div class="a" style="left:1442.0px;top:140.1px;width:5.5px;height:1px;background:#dcdcaa;opacity:0.4"></div>
<div class="a" style="left:1447.5px;top:140.1px;width:0.8px;height:1px;background:#da70d6;opacity:0.4"></div>
<div class="a" style="left:1448.3px;top:140.1px;width:5.5px;height:1px;background:#9cdcfe;opacity:0.4"></div>
<div class="a" style="left:1453.7px;top:140.1px;width:0.8px;height:1px;background:#d4d4d4;opacity:0.4"></div>
<div class="a" style="left:1455.3px;top:140.1px;width:3.1px;height:1px;background:#4fc1ff;opacity:0.4"></div>
<div class="a" style="left:1458.4px;top:140.1px;width:0.8px;height:1px;background:#da70d6;opacity:0.4"></div>
<div class="a" style="left:1459.2px;top:140.1px;width:0.8px;height:1px;background:#d4d4d4;opacity:0.4"></div>
<div class="a" style="left:1460.8px;top:140.1px;width:11.7px;height:1px;background:#9cdcfe;opacity:0.4"></div>
<div class="a" style="left:1472.5px;top:140.1px;width:0.8px;height:1px;background:#d4d4d4;opacity:0.4"></div>
<div class="a" style="left:1474.0px;top:140.1px;width:11.7px;height:1px;background:#9cdcfe;opacity:0.4"></div>
<div class="a" style="left:1485.7px;top:140.1px;width:0.8px;height:1px;background:#ffd700;opacity:0.4"></div>
<div class="a" style="left:1432.7px;top:141.6px;width:2.3px;height:1px;background:#9cdcfe;opacity:0.4"></div>
<div class="a" style="left:1435.0px;top:141.6px;width:0.8px;height:1px;background:#d4d4d4;opacity:0.4"></div>
<div class="a" style="left:1435.8px;top:141.6px;width:2.3px;height:1px;background:#dcdcaa;opacity:0.4"></div>
<div class="a" style="left:1438.1px;top:141.6px;width:1.6px;height:1px;background:#ffd700;opacity:0.4"></div>
<div class="a" style="left:1431.1px;top:143.2px;width:0.8px;height:1px;background:#179fff;opacity:0.4"></div>
<div class="a" style="left:1429.6px;top:144.7px;width:0.8px;height:1px;background:#da70d6;opacity:0.4"></div>
<div class="a" style="left:1428.0px;top:146.2px;width:0.8px;height:1px;background:#ffd700;opacity:0.4"></div>
<div class="a" style="left:1505px;top:486px;width:10px;height:70px;border:1.3px solid #8a8a8a;border-radius:4px;background:#0d0d0d"></div>
<div class="a" style="left:1507px;top:518.0px;width:6px;height:1.4px;background:#3f9f5a"></div>
<div class="a" style="left:1507px;top:520.6px;width:6px;height:1.4px;background:#3f9f5a"></div>
<div class="a" style="left:1507px;top:523.2px;width:6px;height:1.4px;background:#3f9f5a"></div>
<div class="a" style="left:1507px;top:525.8px;width:6px;height:1.4px;background:#3f9f5a"></div>
<div class="a" style="left:1507px;top:528.4px;width:6px;height:1.4px;background:#3f9f5a"></div>
<div class="a" style="left:1507px;top:531.0px;width:6px;height:1.4px;background:#3f9f5a"></div>
<div class="a" style="left:1507px;top:533.6px;width:6px;height:1.4px;background:#3f9f5a"></div>
<div class="a" style="left:1507px;top:536.2px;width:6px;height:1.4px;background:#3f9f5a"></div>
<div class="a" style="left:1507px;top:538.8px;width:6px;height:1.4px;background:#3f9f5a"></div>
<div class="a" style="left:1507px;top:541.4px;width:6px;height:1.4px;background:#3f9f5a"></div>
<div class="a" style="left:1507px;top:544.0px;width:6px;height:1.4px;background:#3f9f5a"></div>
<div class="a" style="left:1507px;top:546.6px;width:6px;height:1.4px;background:#3f9f5a"></div>
<div class="a" style="left:1507px;top:549.2px;width:6px;height:1.4px;background:#3f9f5a"></div>
<div class="a" style="left:1507px;top:551.8px;width:6px;height:1.4px;background:#3f9f5a"></div>
<div class="r" style="left:1328px;top:730.5px;font-size:18px;color:#929292;text-shadow:0 1px 1px rgba(0,0,0,0.6)">@稀土掘金技术社区</div>
</body></html>
